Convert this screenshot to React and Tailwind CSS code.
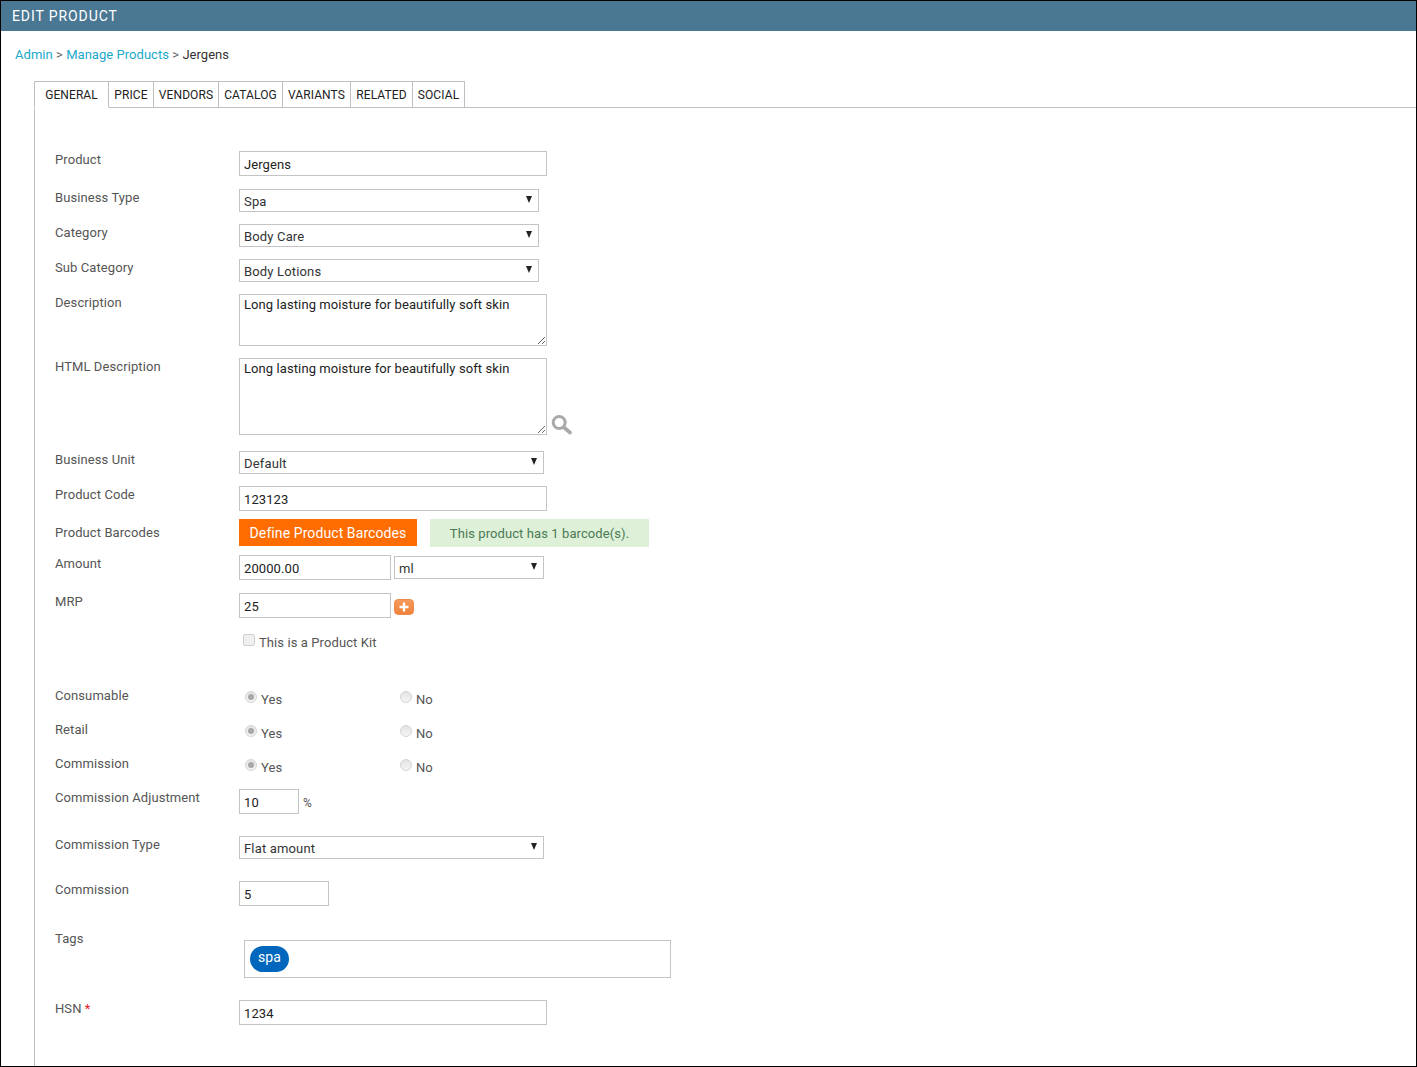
import React from 'react';

const tabs = ['GENERAL', 'PRICE', 'VENDORS', 'CATALOG', 'VARIANTS', 'RELATED', 'SOCIAL'];
const tabWidths = ['w-[75px]', 'w-[45px]', 'w-[65px]', 'w-[64px]', 'w-[68px]', 'w-[62px]', 'w-[52px]'];

const Row = ({ label, labelTop = 'pt-[1px]', className, children }) => (
  <div className={`flex items-start ${className}`}>
    <div className={`w-[184px] shrink-0 leading-[16px] text-[#555] ${labelTop}`}>{label}</div>
    {children}
  </div>
);

const Input = ({ value, className = 'w-[308px]' }) => (
  <input
    readOnly
    defaultValue={value}
    className={`h-[25px] border border-[#c4c4c4] bg-white px-1 pt-[2px] text-[13px] text-[#222] outline-none ${className}`}
  />
);

const Select = ({ value, className = 'w-[300px]' }) => (
  <div className={`relative h-[23px] border border-[#c4c4c4] bg-white pl-1 leading-[23px] tracking-[0.16px] text-[#333] ${className}`}>
    {value}
    <svg className="absolute right-[6px] top-[6px]" width="6" height="7" viewBox="0 0 6 7">
      <path d="M0 0h6L3 7z" fill="#222" />
    </svg>
  </div>
);

const Textarea = ({ value, className }) => (
  <textarea
    readOnly
    defaultValue={value}
    className={`block w-[308px] border border-[#c4c4c4] bg-white px-1 py-[2px] text-[13px] leading-[15px] text-[#222] outline-none ${className}`}
  />
);

const Radio = ({ checked }) => (
  <span className="mt-[3px] flex h-[12px] w-[12px] items-center justify-center rounded-full border border-[#d4d4d4] bg-gradient-to-b from-[#e4e4e4] to-[#f4f4f4]">
    {checked && <span className="h-[6px] w-[6px] rounded-full bg-[#a8a8a8]" />}
  </span>
);

const YesNo = ({ label, className }) => (
  <Row label={label} labelTop="pt-0" className={className}>
    <div className="flex pl-[6px]">
      <div className="flex w-[155px] gap-[4px]">
        <Radio checked />
        <span className="pt-[4px] leading-[16px] text-[#555]">Yes</span>
      </div>
      <div className="flex gap-[4px]">
        <Radio />
        <span className="pt-[4px] leading-[16px] text-[#555]">No</span>
      </div>
    </div>
  </Row>
);

export default function App() {
  return (
    <div className="h-[1067px] overflow-hidden border border-black bg-white font-['Roboto',sans-serif] text-[13px] tracking-[0.09px]">
      <div className="flex h-[30px] items-center bg-[#4a7893] pl-[11px] text-[14px] tracking-[0.9px] text-white">
        EDIT PRODUCT
      </div>

      <div className="pl-[14px] pt-[16px] leading-[16px] tracking-[0.04px] text-[#333]">
        <a className="text-[#1ba9c9]">Admin</a>
        <span className="text-[#666]"> &gt; </span>
        <a className="text-[#1ba9c9]">Manage Products</a>
        <span className="text-[#666]"> &gt; </span>
        Jergens
      </div>

      <div className="ml-[33px] mt-[18px] flex h-[27px] border-b border-[#c0c0c0]">
        {tabs.map((tab, i) => (
          <div
            key={tab}
            className={`flex h-[27px] items-center justify-center border-t border-r border-[#c0c0c0] text-[12px] text-[#222] ${tabWidths[i]} ${i === 0 ? 'border-l bg-white border-b border-b-white' : ''}`}
          >
            {tab}
          </div>
        ))}
      </div>

      <div className="ml-[33px] h-[960px] border-l border-[#c0c0c0] pl-[20px] pt-[43px]">
        <Row label="Product"><Input value="Jergens" /></Row>
        <Row label="Business Type" className="mt-[13px]"><Select value="Spa" /></Row>
        <Row label="Category" className="mt-[12px]"><Select value="Body Care" /></Row>
        <Row label="Sub Category" className="mt-[12px]"><Select value="Body Lotions" /></Row>
        <Row label="Description" className="mt-[12px]">
          <Textarea value="Long lasting moisture for beautifully soft skin" className="h-[52px]" />
        </Row>
        <Row label="HTML Description" className="mt-[12px]">
          <Textarea value="Long lasting moisture for beautifully soft skin" className="h-[77px]" />
          <svg className="ml-[3px] mt-[55px]" width="23" height="22" viewBox="0 0 23 22" fill="none" stroke="#a9a9a9">
            <circle cx="9.2" cy="9.5" r="6" strokeWidth="3" />
            <path d="M14 14.5l6 5" strokeWidth="3.6" strokeLinecap="round" />
          </svg>
        </Row>
        <Row label="Business Unit" className="mt-[16px]"><Select value="Default" className="w-[305px]" /></Row>
        <Row label="Product Code" className="mt-[12px]"><Input value="123123" /></Row>
        <Row label="Product Barcodes" className="mt-[8px]" labelTop="pt-[6px]">
          <button className="h-[27px] w-[178px] bg-[#ff6c00] pt-[1px] text-[14px] text-white">Define Product Barcodes</button>
          <div className="ml-[13px] flex h-[28px] w-[219px] items-center justify-center bg-[#dff0d8] pt-[1px] text-[#4a7a55]">
            This product has 1 barcode(s).
          </div>
        </Row>
        <Row label="Amount" className="mt-[8px]">
          <Input value="20000.00" className="w-[152px]" />
          <Select value="ml" className="ml-[3px] mt-[1px] w-[150px]" />
        </Row>
        <Row label="MRP" className="mt-[13px]">
          <Input value="25" className="w-[152px]" />
          <span className="ml-[3px] mt-[6px] flex h-[16px] w-[20px] items-center justify-center rounded-[4px] border border-[#ee8a4a] bg-gradient-to-b from-[#f79a5a] to-[#f0813a]">
            <svg width="10" height="10" viewBox="0 0 10 10">
              <path d="M5 0.5v9M0.5 5h9" stroke="#fff" strokeWidth="2.4" />
            </svg>
          </span>
        </Row>
        <div className="mt-[16px] flex pl-[188px]">
          <span className="h-[12px] w-[12px] rounded-[2px] border border-[#cfcfcf] bg-[#f0f0f0]" />
          <span className="ml-[4px] mt-[1px] leading-[16px] text-[#555]">This is a Product Kit</span>
        </div>

        <YesNo label="Consumable" className="mt-[37px]" />
        <YesNo label="Retail" className="mt-[14px]" />
        <YesNo label="Commission" className="mt-[14px]" />

        <Row label="Commission Adjustment" className="mt-[13px]">
          <Input value="10" className="w-[60px]" />
          <span className="ml-[4px] pt-[6px] text-[12px] leading-[16px] text-[#555]">%</span>
        </Row>
        <Row label="Commission Type" className="mt-[22px]"><Select value="Flat amount" className="w-[305px]" /></Row>
        <Row label="Commission" className="mt-[22px]"><Input value="5" className="w-[90px]" /></Row>
        <Row label="Tags" className="mt-[25px]" labelTop="pt-0">
          <div className="ml-[5px] mt-[9px] h-[38px] w-[427px] border border-[#c4c4c4] pl-[5px] pt-[5px]">
            <span className="flex h-[26px] w-[39px] items-center justify-center rounded-[13px] bg-[#0067bd] pb-[3px] text-[14px] text-white">spa</span>
          </div>
        </Row>
        <Row label={<>HSN <span className="text-[#e8202a]">*</span></>} className="mt-[22px]">
          <Input value="1234" />
        </Row>
      </div>
    </div>
  );
}
